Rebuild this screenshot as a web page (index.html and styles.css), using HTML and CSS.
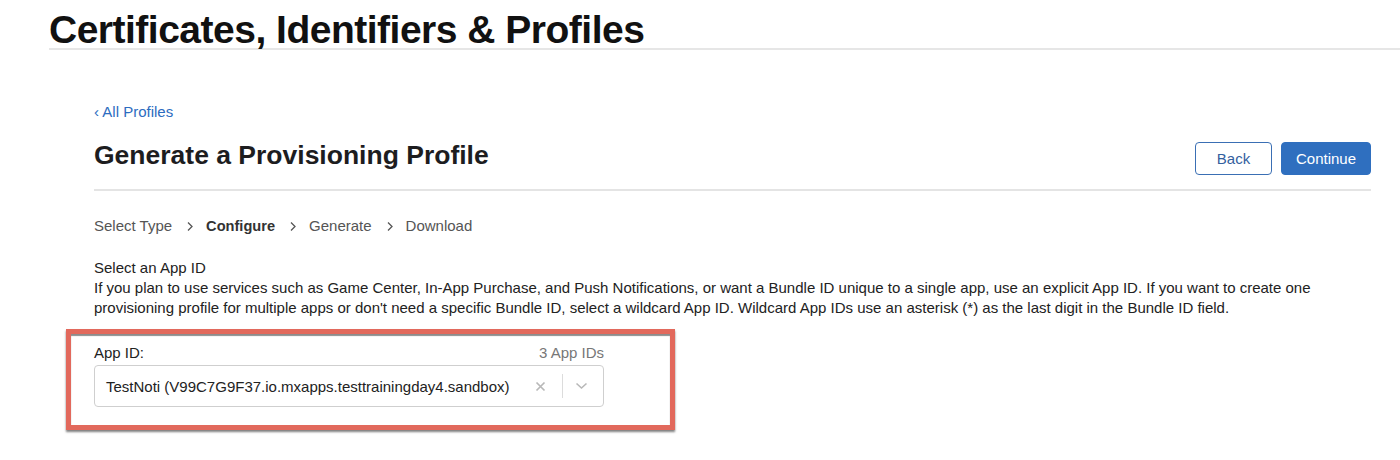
FILE: index.html
```html
<!DOCTYPE html>
<html lang="en">
<head>
<meta charset="utf-8">
<title>Certificates, Identifiers &amp; Profiles</title>
<link rel="stylesheet" href="styles.css">
</head>
<body>
<header class="site-header">
  <h1 class="site-title">Certificates, Identifiers &amp; Profiles</h1>
</header>
<main class="page">
  <a class="back-link" href="#"><span class="back-chev">&lsaquo;</span> All Profiles</a>
  <div class="title-row">
    <h2 class="page-title">Generate a Provisioning Profile</h2>
    <div class="actions">
      <button class="btn btn-secondary">Back</button>
      <button class="btn btn-primary">Continue</button>
    </div>
  </div>
  <nav class="steps">
    <span class="step">Select Type</span>
    <svg class="step-sep" width="8" height="11" viewBox="0 0 8 11"><polyline points="2,1.5 6,5.5 2,9.5" fill="none" stroke="#555" stroke-width="1.3"/></svg>
    <span class="step step-current">Configure</span>
    <svg class="step-sep" width="8" height="11" viewBox="0 0 8 11"><polyline points="2,1.5 6,5.5 2,9.5" fill="none" stroke="#555" stroke-width="1.3"/></svg>
    <span class="step">Generate</span>
    <svg class="step-sep" width="8" height="11" viewBox="0 0 8 11"><polyline points="2,1.5 6,5.5 2,9.5" fill="none" stroke="#555" stroke-width="1.3"/></svg>
    <span class="step">Download</span>
  </nav>
  <section class="intro">
    <h3 class="intro-title">Select an App ID</h3>
    <p class="intro-text">If you plan to use services such as Game Center, In-App Purchase, and Push Notifications, or want a Bundle ID unique to a single app, use an explicit App ID. If you want to create one provisioning profile for multiple apps or don't need a specific Bundle ID, select a wildcard App ID. Wildcard App IDs use an asterisk (*) as the last digit in the Bundle ID field.</p>
  </section>
  <div class="highlight">
    <div class="field">
      <div class="field-head">
        <label class="field-label">App ID:</label>
        <span class="field-count">3 App IDs</span>
      </div>
      <div class="select">
        <span class="select-value">TestNoti (V99C7G9F37.io.mxapps.testtrainingday4.sandbox)</span>
        <span class="select-clear">
          <svg width="11" height="11" viewBox="0 0 11 11"><path d="M1.5 1.5 L9.5 9.5 M9.5 1.5 L1.5 9.5" stroke="#b8b8b8" stroke-width="1.7" fill="none"/></svg>
        </span>
        <span class="select-divider"></span>
        <span class="select-arrow">
          <svg width="13" height="8" viewBox="0 0 13 8"><polyline points="1.5,1.5 6.5,6 11.5,1.5" fill="none" stroke="#b8b8b8" stroke-width="1.6"/></svg>
        </span>
      </div>
    </div>
  </div>
</main>
</body>
</html>
```

FILE: styles.css
```css
* { box-sizing: border-box; }
html, body { margin: 0; padding: 0; background: #fff; }
body {
  font-family: "Liberation Sans", Arial, sans-serif;
  color: #1d1d1f;
  width: 1400px;
  height: 460px;
  overflow: hidden;
}
.site-header {
  margin-left: 49px;
  padding-top: 12px;
  border-bottom: 2px solid #e6e6e6;
}
.site-title {
  margin: 0;
  font-size: 39px;
  line-height: 36px;
  letter-spacing: -0.5px;
  font-weight: 700;
  color: #111;
}
.page {
  margin-left: 94px;
  width: 1277px;
  padding-top: 52px;
}
.back-link {
  display: block;
  font-size: 15px;
  line-height: 20px;
  color: #2c6cc0;
  text-decoration: none;
}
.title-row {
  display: flex;
  align-items: baseline;
  justify-content: space-between;
  margin-top: 17px;
  padding-bottom: 14px;
  border-bottom: 2px solid #e4e4e4;
}
.page-title {
  margin: 0;
  font-size: 26.5px;
  line-height: 33px;
  font-weight: 700;
  color: #1d1d1f;
}
.actions { display: flex; gap: 9px; }
.btn {
  font-family: "Liberation Sans", Arial, sans-serif;
  font-size: 15px;
  height: 33px;
  border-radius: 4px;
  padding: 0;
  cursor: pointer;
}
.btn-secondary {
  width: 77px;
  background: #fff;
  color: #33609e;
  border: 1px solid #3a6fb4;
}
.btn-primary {
  width: 90px;
  background: #2f6fbf;
  color: #fff;
  border: 1px solid #2f6fbf;
}
.steps {
  display: flex;
  align-items: center;
  margin-top: 25px;
  font-size: 15px;
  line-height: 20px;
  color: #555;
}
.step-sep { margin: 0 12px 0 14px; }
.step-current { font-weight: 700; font-size: 14.6px; color: #333; }
.intro { margin-top: 22px; font-size: 15px; line-height: 20px; color: #222; }
.intro-title { margin: 0; font-size: 15px; font-weight: 400; }
.intro-text { margin: 0; }
.highlight {
  margin-top: 11px;
  margin-left: -28px;
  width: 609px;
  border: 5px solid #e2695c;
  padding: 9px 66px 18px 23px;
  box-shadow: 0 2px 2px rgba(0,0,0,0.5), inset 0 2px 1px rgba(0,0,0,0.45);
  background: #fff;
}
.field-head {
  display: flex;
  justify-content: space-between;
  font-size: 15px;
  line-height: 20px;
  margin-bottom: 2px;
}
.field-label { color: #222; }
.field-count { color: #777; }
.select {
  display: flex;
  align-items: center;
  height: 42px;
  border: 1px solid #cfcfcf;
  border-radius: 4px;
  padding-left: 11px;
}
.select-value { flex: 1; font-size: 15px; color: #222; }
.select-clear { display: flex; margin-right: 16px; }
.select-divider { width: 1px; height: 24px; background: #dcdcdc; }
.select-arrow { display: flex; margin: 0 15px 0 12px; }
```
